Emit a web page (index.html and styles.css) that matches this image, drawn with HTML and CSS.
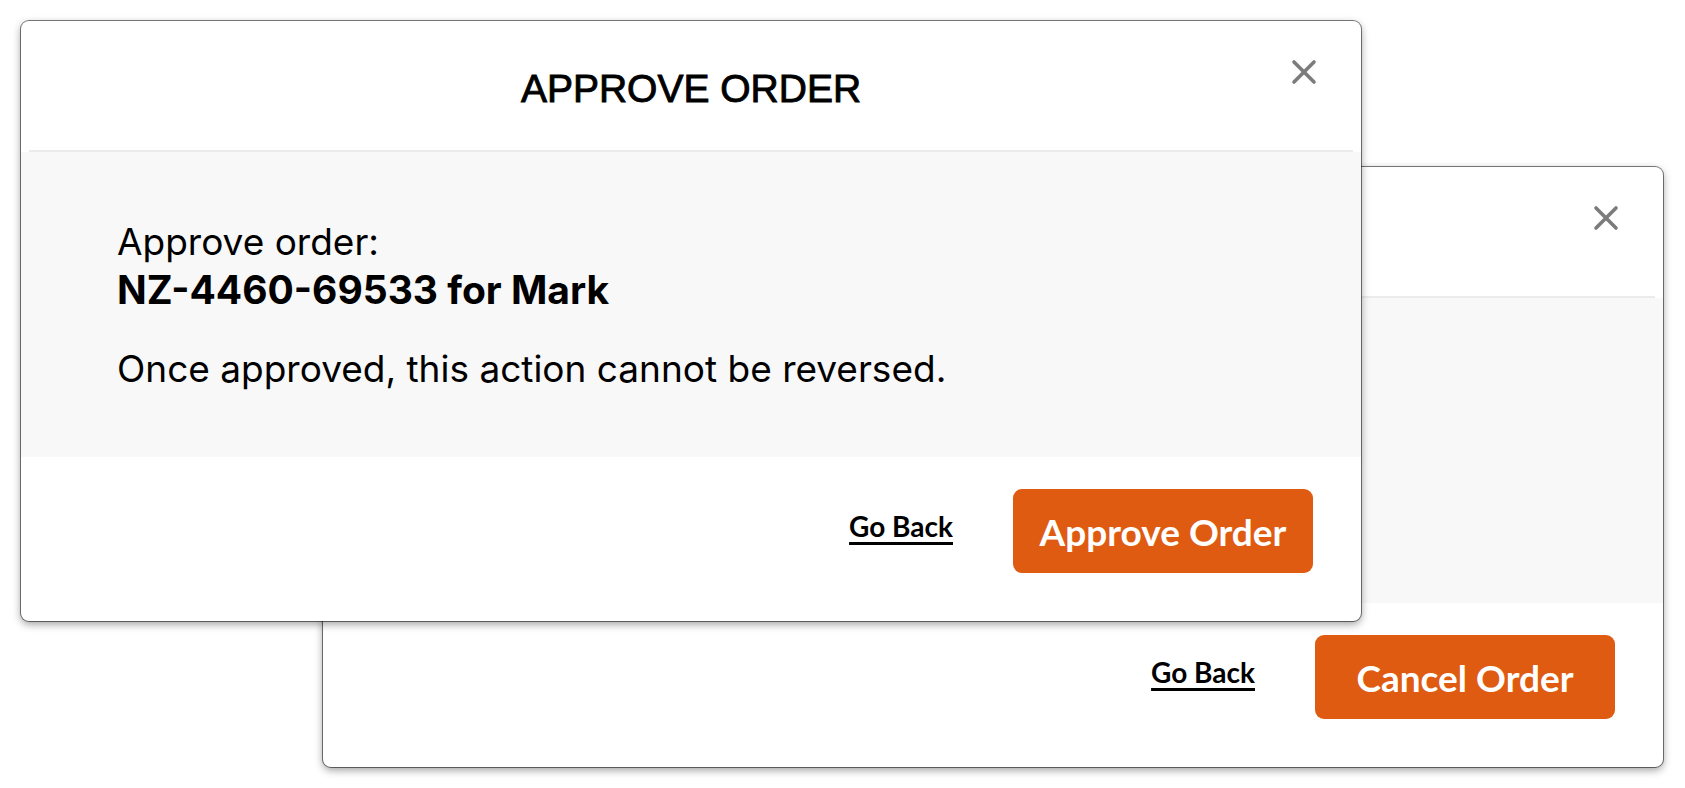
FILE: index.html
```html
<!DOCTYPE html>
<html lang="en">
<head>
<meta charset="utf-8">
<title>Approve Order</title>
<link rel="stylesheet" href="styles.css">
</head>
<body>
<div class="stage">
  <section class="modal modal-back">
    <header class="modal-header">
      <h2 class="modal-title">CANCEL ORDER</h2>
      <button class="close-btn" aria-label="Close">
        <svg viewBox="0 0 26 26" width="26" height="26"><path d="M3 3 L23 23 M23 3 L3 23"/></svg>
      </button>
    </header>
    <div class="modal-body">
      <p class="lead">Cancel order:<br><strong>NZ-4460-69533 for Mark</strong></p>
      <p class="note">Once cancelled, this action cannot be reversed.</p>
    </div>
    <footer class="modal-footer">
      <a class="link-back" href="#">Go Back</a>
      <button class="btn-primary">Cancel Order</button>
    </footer>
  </section>

  <section class="modal modal-front">
    <header class="modal-header">
      <h2 class="modal-title">APPROVE ORDER</h2>
      <button class="close-btn" aria-label="Close">
        <svg viewBox="0 0 26 26" width="26" height="26"><path d="M3 3 L23 23 M23 3 L3 23"/></svg>
      </button>
    </header>
    <div class="modal-body">
      <p class="lead">Approve order:<br><strong>NZ-4460-69533 for Mark</strong></p>
      <p class="note">Once approved, this action cannot be reversed.</p>
    </div>
    <footer class="modal-footer">
      <a class="link-back" href="#">Go Back</a>
      <button class="btn-primary">Approve Order</button>
    </footer>
  </section>
</div>
</body>
</html>
```

FILE: styles.css
```css
* { box-sizing: border-box; }

html, body {
  margin: 0;
  padding: 0;
  background: #ffffff;
}

body {
  font-family: Inter, "Liberation Sans", sans-serif;
  color: #000;
}

.stage {
  position: relative;
  width: 1685px;
  height: 788px;
  overflow: hidden;
}

.modal {
  position: absolute;
  width: 1340px;
  height: 600px;
  background: #fff;
  border-radius: 8px;
  display: flex;
  flex-direction: column;
  overflow: hidden;
  box-shadow: 0 0 0 1px rgba(0, 0, 0, 0.5), 0 3px 9px rgba(0, 0, 0, 0.4);
}

.modal-front { left: 21px; top: 21px; }
.modal-back { left: 323px; top: 167px; }

.modal-header {
  position: relative;
  height: 131px;
  margin: 0 8px;
  border-bottom: 2px solid #ebebeb;
  display: flex;
  align-items: center;
  justify-content: center;
  padding-top: 6px;
  flex: 0 0 auto;
}

.modal-title {
  margin: 0;
  font-family: "Liberation Sans", Arial, sans-serif;
  font-weight: 400;
  font-size: 39px;
  letter-spacing: 0;
  -webkit-text-stroke: 0.9px #000;
}

.close-btn {
  position: absolute;
  right: 36px;
  top: 38px;
  width: 26px;
  height: 26px;
  padding: 0;
  border: 0;
  background: none;
  display: block;
}

.close-btn svg {
  display: block;
  stroke: #7b7b7b;
  stroke-width: 3.6;
  stroke-linecap: round;
  fill: none;
}

.modal-body {
  background: #f8f8f8;
  height: 305px;
  flex: 0 0 auto;
  padding: 66px 96px 0;
  font-size: 37px;
}

.modal-body p {
  margin: 0;
  line-height: 48px;
}

.modal-body strong {
  font-weight: 700;
  font-size: 39px;
}

.modal-body .note {
  margin-top: 30px;
}

.modal-footer {
  flex: 1 1 auto;
  display: flex;
  justify-content: flex-end;
  align-items: center;
  gap: 60px;
  padding: 0 48px 16px;
  font-family: Lato, "Open Sans", sans-serif;
}

.link-back {
  color: #000;
  font-weight: 700;
  font-size: 28px;
  margin-bottom: 10px;
  text-decoration: underline;
  text-decoration-thickness: 2.5px;
  text-underline-offset: 5px;
}

.btn-primary {
  width: 300px;
  height: 84px;
  border: 0;
  border-radius: 9px;
  background: #df5b11;
  color: #fff;
  font-family: Lato, "Open Sans", sans-serif;
  font-weight: 700;
  font-size: 37px;
  padding: 0;
}
```
